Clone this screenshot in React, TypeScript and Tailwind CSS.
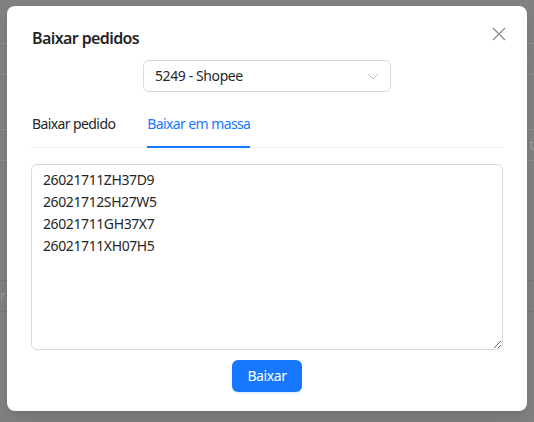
const CODES = ['26021711ZH37D9', '26021712SH27W5', '26021711GH37X7', '26021711XH07H5'];

function BackgroundPage() {
  // the table behind the mask, only its row lines peek out at the sides
  return (
    <div className="flex flex-col">
      <div className="h-[44px] border-b border-[#8d8d8d]" />
      <div className="flex h-[31px] items-center justify-end border-b border-[#8d8d8d] pr-1">
        <svg width="10" height="10" viewBox="0 0 10 10" className="text-[#999]">
          <path d="M1 3l4 4 4-4" fill="none" stroke="currentColor" strokeWidth="1" />
        </svg>
      </div>
      <div className="h-[55px] border-b border-[#8d8d8d]" />
      <div className="flex h-[31px] items-center justify-end border-b border-[#8d8d8d] text-sm text-[#9a9a9a]">
        t
      </div>
      <div className="h-[102px] border-b border-[#858585]" />
      <div className="h-[18px] border-b border-[#777]" />
      <div className="flex h-[31px] items-center border-b border-[#777] text-sm text-[#9a9a9a]">r</div>
    </div>
  );
}

export default function App() {
  return (
    <div
      className="relative h-[422px] w-[534px] overflow-hidden bg-[#808080] tracking-[-0.4px]"
      style={{fontFamily: '"Noto Sans", "Open Sans", sans-serif'}}
    >
      <BackgroundPage />

      <div className="absolute left-[7px] top-[6px] flex w-[520px] flex-col rounded-lg bg-white px-6 pb-[19px] pt-5 shadow-lg">
        <h2 className="pl-px text-base font-semibold leading-6 tracking-[-0.6px] text-[#262626]">Baixar pedidos</h2>
        <button className="absolute right-[17px] top-[17px] flex h-[22px] w-[22px] items-center justify-center text-[#8c8c8c]">
          <svg width="14" height="14" viewBox="0 0 14 14">
            <path d="M1 1l12 12M13 1L1 13" stroke="currentColor" strokeWidth="1.3" />
          </svg>
        </button>

        <div className="mt-[10px] flex justify-center">
          <div className="flex h-8 w-[248px] items-center justify-between rounded-md border border-[#d9d9d9] px-[11px] text-sm text-[#262626]">
            <span>5249 - Shopee</span>
            <svg width="12" height="12" viewBox="0 0 12 12" className="text-[#bfbfbf]">
              <path d="M1 4l5 5 5-5" fill="none" stroke="currentColor" strokeWidth="1" />
            </svg>
          </div>
        </div>

        <div className="mt-[9px] flex gap-8 border-b border-[#f0f0f0] pl-px text-sm tracking-[-0.6px]">
          <button className="py-3 leading-[22px] text-[#262626]">Baixar pedido</button>
          <button className="-mb-px border-b-2 border-[#1677ff] pb-[11px] pt-3 leading-[22px] text-[#1677ff]">
            Baixar em massa
          </button>
        </div>

        <textarea
          className="mt-4 h-[186px] w-full rounded-md border border-[#d9d9d9] px-[11px] py-1 text-sm leading-[22px] text-[#262626] outline-none"
          defaultValue={CODES.join('\n')}
        />

        <div className="mt-[10px] flex justify-center">
          <button className="h-8 rounded-md bg-[#1677ff] px-[15px] text-sm text-white shadow-[0_2px_0_rgba(5,145,255,0.1)]">
            Baixar
          </button>
        </div>
      </div>
    </div>
  );
}
